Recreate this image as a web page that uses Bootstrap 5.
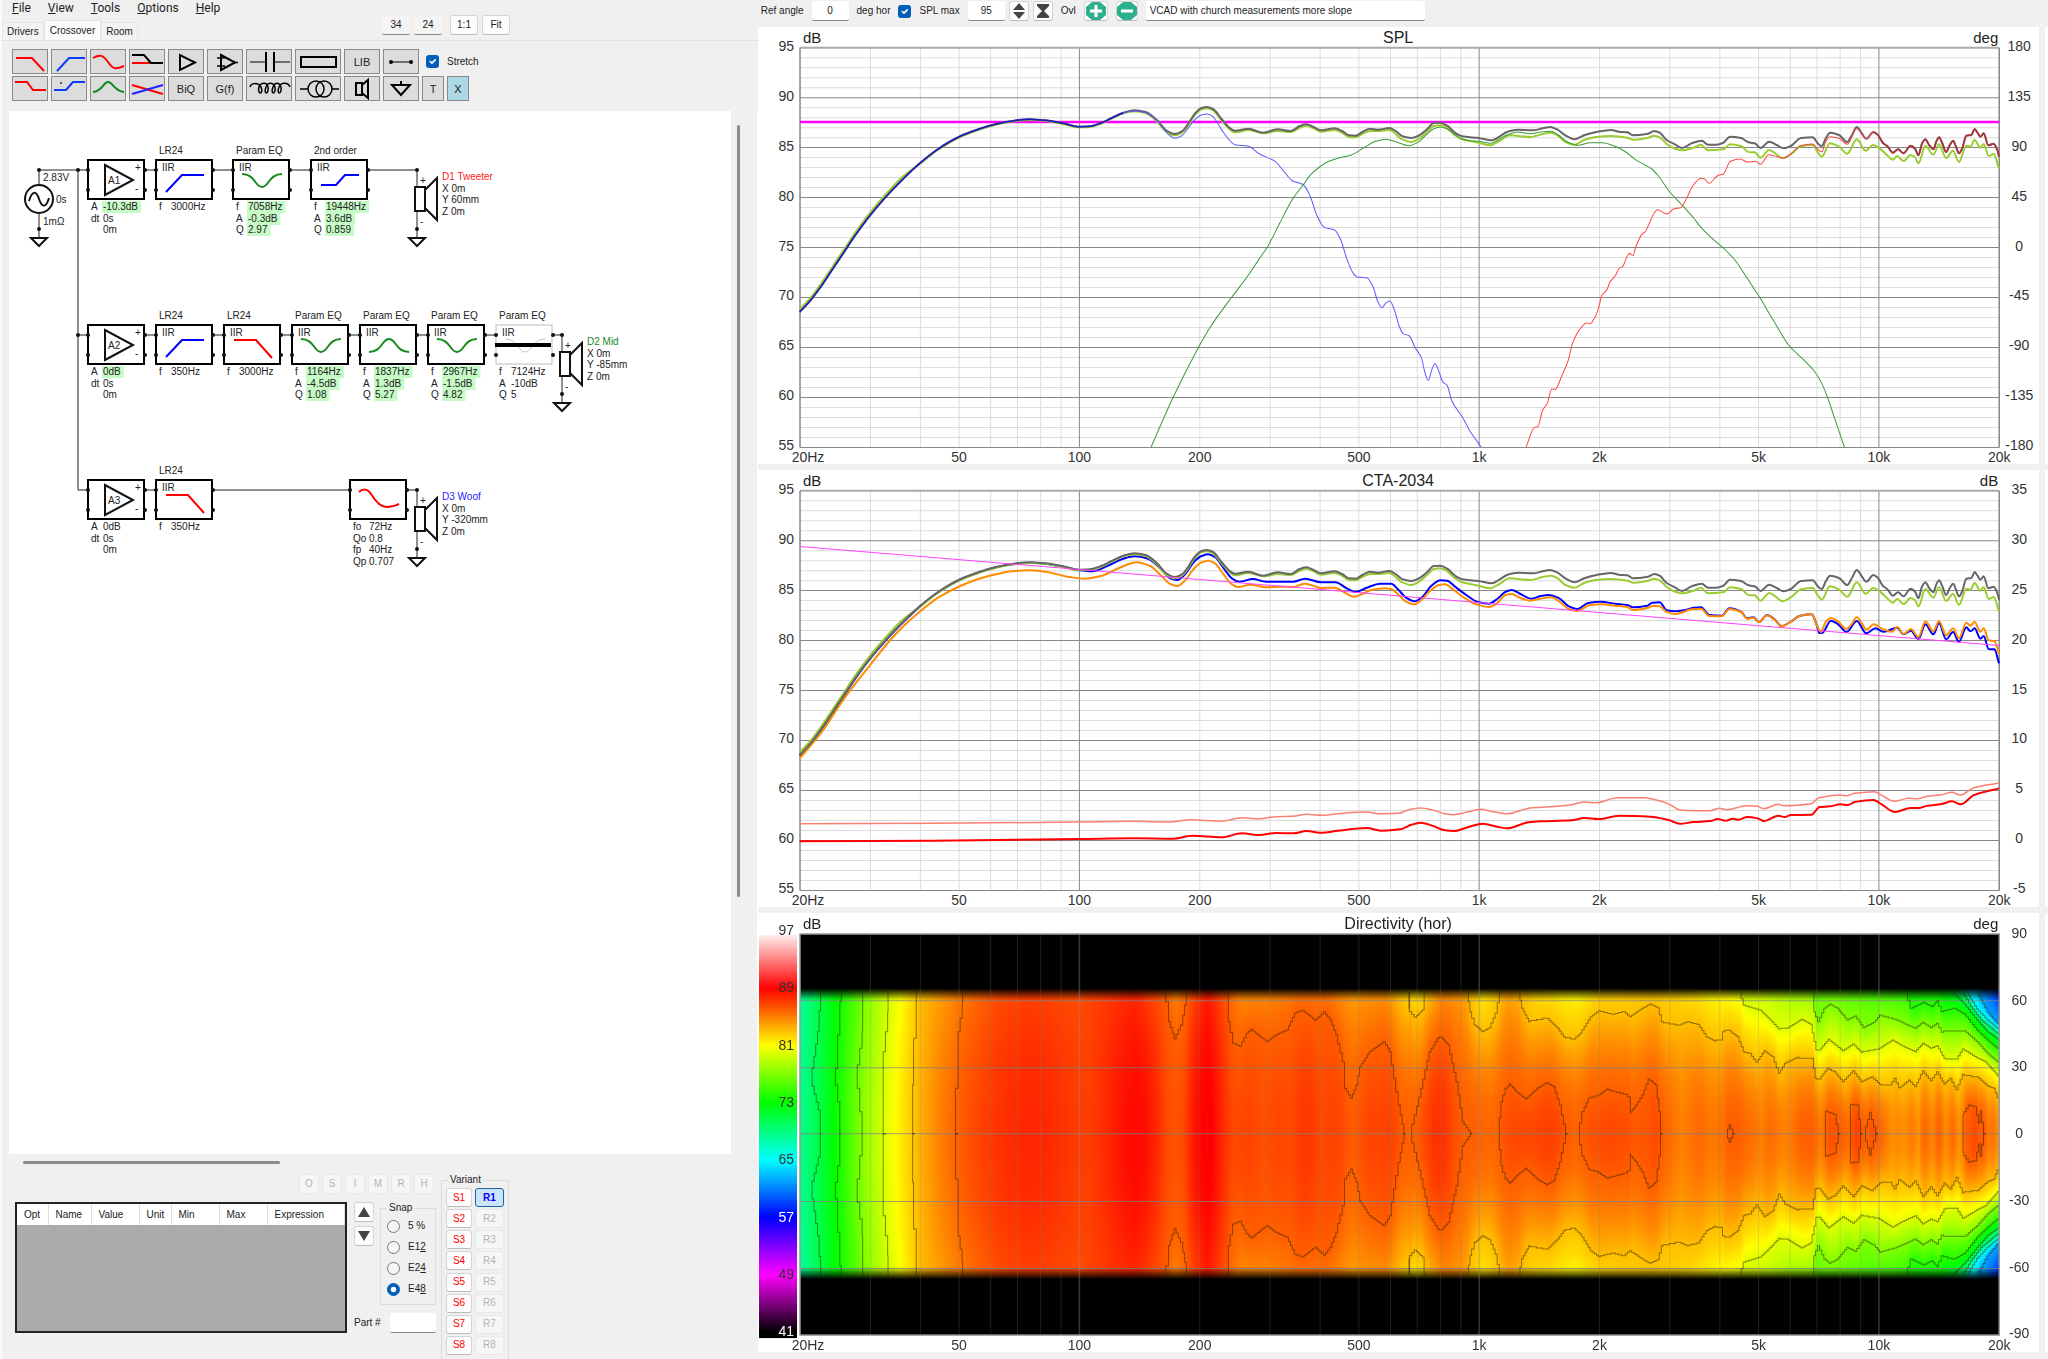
<!DOCTYPE html>
<html lang="en">
<head>
<meta charset="utf-8">
<meta name="viewport" content="width=device-width, initial-scale=1">
<title>Crossover</title>
<link href="https://cdn.jsdelivr.net/npm/bootstrap@5.3.0/dist/css/bootstrap.min.css" rel="stylesheet">
<style>
  body{background:#f0f0f0;color:#222;font:10px/12px "Liberation Sans",Arial,sans-serif;overflow:hidden}
  .left-pane{width:37%;border-left:2px solid #fafafa}
  .menu-strip{height:20px;gap:17px;padding-left:10px;font:12px/16px Roboto,"Liberation Sans",sans-serif}
  .menu-strip a{color:#222;text-decoration:none}
  .tab-row{height:21px}
  .tab-item{border:1px solid #e6e6e6;border-bottom:0;background:#f3f3f3;height:18px;padding:0 4px;color:#222;line-height:18px}
  .tab-item.active{background:#fbfbfb;height:20px;padding:0 5px;line-height:19px}
  .win-btn{background:#fdfdfd;border:1px solid #d4d4d4;border-bottom-color:#bbb;border-radius:3px;padding:0;height:20px;color:#222;display:flex;align-items:center;justify-content:center;font-size:10px;line-height:12px}
  .win-btn:disabled{background:#f6f6f6;border-color:#e9e9e9;color:#b4b4b4}
  .zoom-row{left:380px;top:15px}
  .zoom-row .win-btn{width:28px}
  .flat-field{border:0;border-bottom:1px solid #888;background:#f4f4f4;text-align:center;height:20px;font-size:10px;line-height:12px;padding:0;color:#222;border-radius:2px}
  .flat-white{background:#fff}
  .tool-rows{padding:8px 10px 10px;gap:2px}
  .tool{width:36px;height:25px;background:#dcdcdc;border:1px solid #8a8a8a;padding:0;display:flex;align-items:center;justify-content:center;font-size:11px;line-height:12px;color:#222}
  .tool svg{width:100%;height:100%;overflow:visible;fill:none;stroke:#000;stroke-width:2}
  .tool-wide{width:46px}.tool-slim{width:22px}
  .tool-on{background:#add8e6}
  .tick{width:13px;height:13px;margin:0;flex:none}
  .tick:checked{background-color:#005fb8;border-color:#005fb8}
  .snap .tick:not(:checked){border-color:#777;background-color:#f6f6f6}
  .sheet{background:#fff;min-height:0;overflow:hidden}
  .v-track{width:15px;padding:14px 6px 0}
  .v-thumb{width:3px;height:75%;background:#8c8c8c;border-radius:2px}
  .h-track{height:20px;padding:7px 0 0 13px}
  .h-thumb{width:257px;height:3px;background:#8c8c8c;border-radius:2px}
  .dock{height:185px;padding-left:5px}
  .mini{width:20px}
  .grid-box{width:332px;height:131px;background:#ababab;border:2px solid #222}
  .grid-box table{width:100%;margin:0;table-layout:fixed;border-collapse:collapse}
  .grid-box th{background:#fff;font-weight:400;height:21px;border-right:1px solid #ddd;padding:0 0 0 7px;white-space:nowrap}
  .frame{border:1px solid #dcdcdc;margin:0;padding:0}
  .frame legend{float:none;width:auto;font-size:10px;line-height:12px;margin:0 0 0 6px;padding:0 2px}
  .snap{width:56px;height:103px}
  .snap-list{padding:6px 0 0 6px;gap:8px}
  .variant{width:68px;height:200px}
  .variant-list{height:169px;padding:2px 4px 0;display:grid;grid-template-columns:26px 29px;column-gap:3px;align-content:space-between}
  .variant-list .win-btn{height:19px}
  .variant-list .s-btn{color:#f00}
  .variant-list .r-on{background:#cce4f7;border:1px solid #1a66a8;color:#00f;font-weight:700}
  .ref-bar{height:27px;padding:1px 0 6px 3px}
  .ref-bar label{white-space:nowrap}
  .panel{background:#fff}
  .panel svg{display:block;width:100%;height:auto}
  .edge-strip{width:3px;margin-left:6px;padding-top:27px}
  svg text{font-family:"Liberation Sans",Arial,sans-serif}
  .ax{font-size:14px;fill:#333}
  .cap{font-size:16px;fill:#222}
  #schematic text{font-size:10px;fill:#222}
</style>
<script src="https://cdn.jsdelivr.net/npm/bootstrap@5.3.0/dist/js/bootstrap.bundle.min.js"></script>
</head>
<body>
<div class="d-flex vh-100">
  <section class="left-pane d-flex flex-column flex-shrink-0 position-relative">
    <nav class="menu-strip d-flex">
      <a href="#"><u>F</u>ile</a><a href="#"><u>V</u>iew</a><a href="#"><u>T</u>ools</a><a href="#"><u>O</u>ptions</a><a href="#"><u>H</u>elp</a>
    </nav>
    <div class="zoom-row position-absolute d-flex gap-1">
      <input class="flat-field" style="width:28px" value="34" aria-label="Columns"><input class="flat-field" style="width:28px" value="24" aria-label="Rows">
      <button class="win-btn ms-1">1:1</button><button class="win-btn">Fit</button>
    </div>
    <div class="tab-row d-flex align-items-end border-bottom">
      <button class="tab-item">Drivers</button><button class="tab-item active">Crossover</button><button class="tab-item">Room</button>
    </div>
    <div class="tool-rows d-flex flex-column">
      <div class="d-flex align-items-center" style="gap:3px">
        <button class="tool" aria-label="Low pass"><svg><path d="M3 8H19L31 21" stroke="red"/></svg></button>
        <button class="tool" aria-label="High pass"><svg><path d="M5 21L17 8H33" stroke="#0a3cff"/></svg></button>
        <button class="tool" aria-label="Biquad shape"><svg><path d="M2 8C9 4 12 5 17 12S24 20 33 16" stroke="red"/></svg></button>
        <button class="tool" aria-label="Shelf"><svg><path d="M2 13H20" stroke="red"/><path d="M2 5H14L21 13H33"/></svg></button>
        <button class="tool" aria-label="Buffer"><svg><path d="M11 5V20L26 12.500Z"/></svg></button>
        <button class="tool" aria-label="Op-amp"><svg><path d="M13 5V20L27 12.500Z"/><path d="M9 8H17M13 5V12M9 16H17M26 12.500H30" stroke-width="1.500"/></svg></button>
        <button class="tool tool-wide" aria-label="Capacitor"><svg><path d="M3 12H19M27 12H43" stroke-width="1"/><path d="M19 2V22M27 2V22"/></svg></button>
        <button class="tool tool-wide" aria-label="Resistor"><svg><rect x="5" y="7" width="35" height="10"/></svg></button>
        <button class="tool">LIB</button>
        <button class="tool" aria-label="Wire"><svg><path d="M7 12H28" stroke-width="1"/><circle cx="7" cy="12" r="1"/><circle cx="27" cy="12" r="1"/></svg></button>
        <div class="d-flex align-items-center ps-1"><input type="checkbox" class="form-check-input tick" id="stretch" checked><label for="stretch" class="ps-1 ms-1">Stretch</label></div>
      </div>
      <div class="d-flex align-items-center" style="gap:3px">
        <button class="tool" aria-label="Low shelf"><svg><path d="M2 5H14L20 13H33" stroke="red"/></svg></button>
        <button class="tool" aria-label="High shelf"><svg><path d="M2 13H14L21 5H33" stroke="#0a3cff"/><circle cx="9" cy="6" r=".5" stroke-width="1"/></svg></button>
        <button class="tool" aria-label="Peak"><svg><path d="M2 15C12 14 12 5 17 5S23 14 33 15" stroke="#0a8a1e"/></svg></button>
        <button class="tool" aria-label="Cross"><svg><path d="M2 8L33 17" stroke="red"/><path d="M2 17L33 8" stroke="#22f"/></svg></button>
        <button class="tool">BiQ</button>
        <button class="tool">G(f)</button>
        <button class="tool tool-wide" aria-label="Inductor"><svg><path d="M3 10C4 6 11 5 14 10C17 18 10 18 12 10C14 5 20 5 21 10C22 18 16 18 19 10C21 5 26 5 28 10C29 18 23 18 26 10C28 5 32 5 34 10C35 18 29 18 32 10C34 5 41 5 43 10" stroke-width="1.500"/></svg></button>
        <button class="tool tool-wide" aria-label="Transformer"><svg><g style="stroke-width:1.500"><circle cx="20" cy="12" r="8"/><circle cx="28" cy="12" r="8"/><path d="M4 12H12M36 12H43"/></g></svg></button>
        <button class="tool" aria-label="Driver"><svg><path d="M11 6H17V18H11ZM17 8L23 3V21L17 16"/></svg></button>
        <button class="tool" aria-label="Ground"><svg><path d="M8 8H26L17 18ZM17 8V4"/></svg></button>
        <button class="tool tool-slim">T</button><button class="tool tool-slim tool-on">X</button>
      </div>
    </div>
    <div class="d-flex flex-fill overflow-hidden" style="padding-left:7px;min-height:0">
      <div class="sheet flex-fill"><svg id="schematic" width="640" height="500" viewBox="9 111 640 500"></svg></div>
      <div class="v-track flex-shrink-0"><div class="v-thumb"></div></div>
      <div style="width:12px" class="flex-shrink-0 border-end border-white"></div>
    </div>
    <div class="h-track ms-2 flex-shrink-0"><div class="h-thumb"></div></div>
    <div class="dock d-flex flex-shrink-0 ms-2">
      <div class="d-flex flex-column" style="gap:8px">
        <div class="d-flex justify-content-end" style="gap:3px;padding-right:2px">
          <button class="win-btn mini" disabled>O</button><button class="win-btn mini" disabled>S</button><button class="win-btn mini" disabled>I</button><button class="win-btn mini" disabled>M</button><button class="win-btn mini" disabled>R</button><button class="win-btn mini" disabled>H</button>
        </div>
        <div class="d-flex" style="gap:7px">
          <div class="grid-box">
            <table><colgroup><col style="width:31px"><col style="width:43px"><col style="width:48px"><col style="width:32px"><col style="width:48px"><col style="width:48px"><col></colgroup>
            <thead><tr><th>Opt</th><th>Name</th><th>Value</th><th>Unit</th><th>Min</th><th>Max</th><th>Expression</th></tr></thead></table>
          </div>
          <div class="d-flex flex-column" style="gap:8px">
            <div class="d-flex" style="gap:6px">
              <div class="d-flex flex-column gap-1">
                <button class="win-btn mini" aria-label="Up"><svg width="14" height="12"><path d="M1 11H13L7 1Z" fill="#444"/></svg></button>
                <button class="win-btn mini" aria-label="Down"><svg width="14" height="12"><path d="M1 1H13L7 11Z" fill="#444"/></svg></button>
              </div>
              <fieldset class="frame snap"><legend>Snap</legend>
                <div class="snap-list d-flex flex-column">
                  <div class="d-flex gap-1"><input type="radio" name="snap" class="form-check-input tick" id="s5"><label for="s5" class="ps-1">5 %</label></div>
                  <div class="d-flex gap-1"><input type="radio" name="snap" class="form-check-input tick" id="s12"><label for="s12" class="ps-1">E1<u>2</u></label></div>
                  <div class="d-flex gap-1"><input type="radio" name="snap" class="form-check-input tick" id="s24"><label for="s24" class="ps-1">E2<u>4</u></label></div>
                  <div class="d-flex gap-1"><input type="radio" name="snap" class="form-check-input tick" id="s48" checked><label for="s48" class="ps-1">E4<u>8</u></label></div>
                </div>
              </fieldset>
            </div>
            <div class="d-flex align-items-center justify-content-between"><label for="part">Part #</label><input id="part" class="flat-field flat-white" style="width:46px"></div>
          </div>
        </div>
      </div>
      <fieldset class="frame variant" style="margin-left:5px"><legend>Variant</legend><div class="variant-list" id="variants"></div></fieldset>
    </div>
  </section>

  <main class="flex-fill d-flex flex-column" style="min-width:0">
    <div class="ref-bar d-flex align-items-center flex-shrink-0">
      <label for="refa">Ref angle</label>
      <input id="refa" class="flat-field flat-white ms-2" style="width:37px" value="0">
      <span class="ms-2">deg hor</span>
      <input type="checkbox" class="form-check-input tick ms-2" id="splmax" checked><label for="splmax" class="ms-1 ps-1">SPL max</label>
      <input class="flat-field flat-white ms-2" style="width:37px" value="95" aria-label="SPL max value">
      <button class="win-btn mini ms-1" aria-label="Step"><svg width="14" height="18"><path d="M1 8H13L7 1ZM1 10H13L7 17Z" fill="#444"/></svg></button>
      <button class="win-btn mini ms-1" aria-label="Fit range"><svg width="14" height="18"><path d="M1 2H13V4L8 9L13 14V16H1V14L6 9L1 4Z" fill="#444"/></svg></button>
      <span class="ms-2">Ovl</span>
      <button class="win-btn ms-2" style="width:24px" aria-label="Add overlay"><svg width="20" height="18"><path d="M6 0H14L20 5V13L14 18H6L0 13V5Z" fill="#2fb08c"/><path d="M10 3V15M4 9H16" stroke="#fff" stroke-width="3"/></svg></button>
      <button class="win-btn ms-2" style="width:22px" aria-label="Remove overlay"><svg width="20" height="18"><path d="M6 0H14L20 5V13L14 18H6L0 13V5Z" fill="#2fb08c"/><path d="M4 9H16" stroke="#fff" stroke-width="3"/></svg></button>
      <input class="flat-field flat-white ms-2 ps-1 text-start" style="width:279px" value="VCAD with church measurements more slope" aria-label="Title">
    </div>
    <div class="d-flex flex-column" style="gap:6px">
      <div class="panel"><svg id="spl" viewBox="0 0 1281 437"></svg></div>
      <div class="panel"><svg id="cta" viewBox="0 0 1281 437"></svg></div>
      <div class="panel"><svg id="dir" viewBox="0 0 1281 439"></svg></div>
    </div>
  </main>
  <aside class="edge-strip flex-shrink-0 d-flex flex-column" style="gap:6px"><div class="bg-white" style="height:437px"></div><div class="bg-white" style="height:437px"></div><div class="bg-white" style="height:439px"></div></aside>
</div>

<script>
const NS='http://www.w3.org/2000/svg';
function add(p,tag,at,txt){const e=document.createElementNS(NS,tag);for(const k in at)e.setAttribute(k,at[k]);if(txt!=null)e.textContent=txt;p.appendChild(e);return e}

/* variant buttons */
const vl=document.getElementById('variants');
for(let i=1;i<9;i++){
  vl.insertAdjacentHTML('beforeend',`<button class="win-btn s-btn">S${i}</button><button class="win-btn ${i==1?'r-on':''}" ${i>1?'disabled':''}>R${i}</button>`);
}

/* ---------- schematic ---------- */
const S=document.getElementById('schematic');
const line=(d,c='#222',w=1)=>add(S,'path',{d,stroke:c,'stroke-width':w,fill:'none'});
const dot=(x,y)=>add(S,'circle',{cx:x,cy:y,r:2,fill:'#111'});
const txt=(x,y,t,c)=>{const e=add(S,'text',{x,y},t);if(c)e.style.fill=c;return e};
const shapes={
  hp:['#00f','M10 32L26 15H48'],lp:['#f00','M10 15H32L48 33'],
  dip:['#168a1e','M9 14C22 14 22 27 29 27S36 14 49 14'],peak:['#168a1e','M9 27C22 27 22 14 29 14S36 27 49 27'],
  hs:['#00f','M10 25H25L34 15H48'],lt:['#f00','M9 12C13 8 18 9 21 14S30 28 38 27S44 26 49 24']};
function box(x,y,kind,title,rows,o={}){
  if(kind!='amp'&&title)txt(x+3,y-6,title);
  add(S,'rect',{x:x,y:y,width:56,height:39,fill:'#fff',stroke:o.off?'#bbb':'#000','stroke-width':o.off?1:2});
  if(kind=='amp'){line(`M${x+17} ${y+5}V${y+35}L${x+45} ${y+20}Z`,'#111',2);txt(x+20,y+24,title);txt(x+47,y+11,'+');txt(x+47,y+32,'-');}
  else{const[c,d]=shapes[kind];const p=line(d,c,o.off?1:2);p.setAttribute('transform',`translate(${x},${y})`);if(o.off)p.setAttribute('opacity','.35');
    if(kind!='lt')txt(x+6,y+11,'IIR')}
  if(o.off)line(`M${x-1} ${y+20}H${x+55}`,'#000',4);
  [[0,10],[0,30],[57,10],[57,30]].forEach(([a,b])=>dot(x+a,y+b));
  rows.forEach(([k,v,g],i)=>{const by=y+50+Math.round(i*11.700);
    const vx=x+(kind=='lt'?19:15);
    const r=g?add(S,'rect',{x:vx-1,y:by-9,width:10,height:12,fill:'#c6fbc6'}):null;
    txt(x+3,by,k);const t=txt(vx,by,v);if(r)r.setAttribute('width',t.getComputedTextLength()+4);});
}
const amp=(x,y,n,rows)=>box(x,y,'amp',n,rows);
const ground=(x,y)=>{line(`M${x} ${y-9}V${y}`,'#222',1);line(`M${x-8} ${y}H${x+8}L${x} ${y+8}Z`,'#111',2);dot(x,y-9)};
function speaker(x,y,name,c,rows){
  line(`M${x} ${y}V${y+17}M${x} ${y+41}V${y+59}`);dot(x,y);
  line(`M${x-2} ${y+17}H${x+8}V${y+41}H${x-2}ZM${x+8} ${y+20}L${x+20} ${y+8}V${y+50}L${x+8} ${y+38}`,'#111',2);
  txt(x+3,y+14,'+');txt(x+3,y+55,'-');ground(x,y+68);
  [name,...rows].forEach((t,i)=>txt(x+25,y+10+Math.round(i*11.700),t,i?null:c));
}
line('M39 170H417M78 170V490M78 335H562M78 490H417M39 170V184M39 214V229');
dot(39,170);dot(78,170);dot(78,335);
add(S,'circle',{cx:39,cy:199,r:14,fill:'#fff',stroke:'#111','stroke-width':2});
line('M29 201C32 191 36 190 39 199S46 208 49 198','#111',2);
txt(43,181,'2.83V');txt(56,203,'0s');txt(43,225,'1mΩ');ground(39,238);
amp(88,160,'A1',[['A','-10.3dB',1],['dt','0s'],['','0m']]);
box(156,160,'hp','LR24',[['f','3000Hz']]);
box(233,160,'dip','Param EQ',[['f','7058Hz',1],['A','-0.3dB',1],['Q','2.97',1]]);
box(311,160,'hs','2nd order',[['f','19448Hz',1],['A','3.6dB',1],['Q','0.859',1]]);
speaker(417,170,'D1 Tweeter','#f22',['X 0m','Y 60mm','Z 0m']);
amp(88,325,'A2',[['A','0dB',1],['dt','0s'],['','0m']]);
box(156,325,'hp','LR24',[['f','350Hz']]);
box(224,325,'lp','LR24',[['f','3000Hz']]);
box(292,325,'dip','Param EQ',[['f','1164Hz',1],['A','-4.5dB',1],['Q','1.08',1]]);
box(360,325,'peak','Param EQ',[['f','1837Hz',1],['A','1.3dB',1],['Q','5.27',1]]);
box(428,325,'dip','Param EQ',[['f','2967Hz',1],['A','-1.5dB',1],['Q','4.82',1]]);
box(496,325,'dip','Param EQ',[['f','7124Hz'],['A','-10dB'],['Q','5']],{off:1});
speaker(562,335,'D2 Mid','#168a1e',['X 0m','Y -85mm','Z 0m']);
amp(88,480,'A3',[['A','0dB'],['dt','0s'],['','0m']]);
box(156,480,'lp','LR24',[['f','350Hz']]);
box(350,480,'lt','',[['fo','72Hz'],['Qo','0.8'],['fp','40Hz'],['Qp','0.707']]);
speaker(417,490,'D3 Woof','#22f',['X 0m','Y -320mm','Z 0m']);

/* ---------- charts ---------- */
/* traces are stored in two halves, a coarse low band and a fine high band, on a 3-per-pixel level scale */
const X0=42,X1=1241,DEC=(X1-X0)/3;
const fx=f=>X0+DEC*Math.log10(f/20);
const lo=v=>v/2.240-3, hi=v=>642+v/2.420;
const parse=s=>s.trim().split(/\s+/).map(p=>p.split(',').map(Number));
function join(a,b,oy,sy=0){return [...(a?parse(a).map(([x,y])=>[lo(x),(y+sy)/3-oy]):[]),...(b?parse(b).map(([x,y])=>[hi(x),(y+sy)/3-oy]):[])]}
function smooth(p){
  const n=p.length,m=[];
  const d=i=>(p[i+1][1]-p[i][1])/(p[i+1][0]-p[i][0]);
  for(let i=0;i<n;i++){if(i==0)m.push(d(0));else if(i==n-1)m.push(d(n-2));else{const a=d(i-1),b=d(i);m.push(a*b<=0?0:2*a*b/(a+b))}}
  let s=`M${p[0][0].toFixed(1)} ${p[0][1].toFixed(1)}`;
  for(let i=0;i<n-1;i++){const h=(p[i+1][0]-p[i][0])/3;
    s+=`C${(p[i][0]+h).toFixed(1)} ${(p[i][1]+m[i]*h).toFixed(1)} ${(p[i+1][0]-h).toFixed(1)} ${(p[i+1][1]-m[i+1]*h).toFixed(1)} ${p[i+1][0].toFixed(1)} ${p[i+1][1].toFixed(1)}`}
  return s;
}
const D={};
D.rise='100,876 125,840 150,795 175,745 200,695 225,645 256,589 292,532 330,479 369,430 410,387 456,351 500,328 540,312 580,302 615,298 650,301 690,310 725,320 750,319 775,309 800,293 825,278 ';
D.woof=[D.rise+'850,273 872,277 892,292 910,315 925,342 940,355 955,348 970,325 985,299 1000,285 1012,282 1025,289 1040,318 1055,348 1075,374 1105,379 1130,402 1165,424 1185,455 1203,482 1228,494 1243,527 1258,585 1275,622 1298,630 1312,660 1325,715 1340,760 1350,772 1370,773 1384,800 1395,845 1404,863 1412,850 1422,843 1432,870 1442,915 1451,940 1465,947 1478,982 1492,1012 1502,1065 1508,1081 1516,1048 1523,1031 1532,1055 1540,1085 1550,1096 1560,1140',
 '133,1160 150,1190 170,1235 190,1270 196,1281'];
D.mid=['887,1281 937,1130 994,980 1020,920 1068,831 1105,765 1130,715 1148,680 1175,610 1205,535 1228,494 1245,463 1265,440 1285,424 1305,415 1335,405 1365,382 1390,364 1412,358 1435,365 1465,377 1485,367 1505,342 1520,326 1535,321 1550,327',
 '133,344 150,357 170,362 190,364 220,370 240,357 260,344 285,336 315,341 345,335 365,334 385,347 405,366 430,376 460,368 490,368 520,379 545,395 565,415 585,430 608,446 625,468 650,512 682,555 710,594 730,625 755,655 783,685 810,720 840,775 870,832 905,905 940,975 975,1018 1000,1050 1020,1090 1035,1135 1050,1190 1065,1245 1075,1281'];
D.tail='1145,336 1156,345 1168,368 1180,380 1192,398 1205,388 1218,400 1235,377 1246,386 1254,406 1263,370 1271,358 1280,375 1290,388 1298,362 1304,352 1312,370 1321,396 1330,375 1338,362 1345,380 1352,400 1360,385 1370,347 1382,345 1390,327 1397,338 1404,350 1412,340 1423,376 1436,371 1445,390 1449,410';
D.axis=[D.rise+'850,271 875,276 900,300 920,330 940,342 955,335 970,312 985,281 1000,264 1012,261 1025,266 1045,297 1060,320 1075,332 1105,326 1138,338 1170,328 1200,333 1220,318 1235,313 1250,320 1268,331 1298,325 1315,333 1330,346 1345,347 1360,336 1378,326 1395,329 1420,324 1435,333 1450,349 1470,354 1485,348 1505,328 1520,309 1535,308 1550,317',
 '133,338 150,349 190,354 222,361 240,350 260,335 285,329 320,331 345,325 363,321 380,328 400,346 422,358 445,346 475,336 510,330 530,335 550,337 563,346 600,341 615,333 628,338 645,360 665,373 682,384 705,370 730,362 745,374 765,374 782,368 798,350 825,354 843,367 858,370 872,384 893,365 910,374 928,385 945,378 970,354 998,352 1012,372 1020,378 1030,355 1040,338 1062,345 1082,366 1093,345 1105,321 1117,340 1128,356 '+D.tail];
D.win=[D.rise.replace(/,(\d+)/g,(m,v)=>','+(+v-(v>450?8:-2)))+'850,274 875,279 900,304 920,334 940,346 955,339 970,316 985,285 1000,268 1012,265 1025,270 1045,301 1060,324 1075,337 1105,330 1138,340 1170,333 1200,336 1220,323 1235,317 1250,324 1268,335 1298,330 1315,338 1330,351 1345,352 1360,342 1378,333 1395,333 1420,330 1450,358 1470,366 1485,358 1505,336 1520,318 1535,316 1550,324',
 '133,346 150,358 190,368 218,376 240,363 265,346 315,351 345,342 365,338 380,345 400,366 422,374 445,360 475,351 510,348 550,353 563,359 600,353 615,347 628,352 645,372 665,386 682,391 710,383 728,374 745,391 782,388 798,373 825,378 843,396 858,397 872,413 893,390 910,402 925,415 945,403 970,379 998,375 1012,400 1020,410 1040,370 1062,380 1082,401 1105,358 1126,392 1145,375 1160,385 1178,405 1192,419 1203,408 1218,423 1235,405 1246,412 1254,430 1271,378 1290,404 1304,373 1321,414 1338,392 1352,426 1370,377 1380,380 1390,360 1404,383 1412,372 1424,408 1436,402 1449,446'];
D.tweet=['','305,1281 325,1222 333,1220 345,1170 356,1150 367,1107 375,1108 392,1065 407,1020 417,970 435,927 452,909 459,911 473,888 482,855 488,825 500,810 508,785 520,768 530,745 538,740 550,707 556,700 563,707 571,677 585,643 593,635 603,610 612,584 623,569 645,582 663,566 679,563 693,535 707,500 728,475 737,477 747,490 770,466 782,462 799,424 823,417 840,426 860,424 872,433 892,404 928,414 945,402 968,377 998,372 1012,390 1020,395 1030,365 1040,350 1062,355 1082,373 1105,326 1128,356 '+D.tail];
D.power=['100,880 150,800 200,700 256,603 303,525 335,480 369,440 410,398 456,365 500,342 540,328 575,319 610,316 650,320 700,335 738,341 775,333 815,309 855,292 885,303 910,332 930,357 945,363 960,350 985,308 1000,292 1015,287 1030,295 1050,329 1068,358 1082,366 1110,359 1145,367 1175,365 1205,366 1230,356 1250,362 1268,369 1298,368 1320,382 1340,395 1360,387 1380,375 1410,370 1425,372 1440,388 1458,410 1475,418 1490,408 1510,380 1530,361 1545,358',
 '133,378 155,398 185,418 215,426 232,417 255,390 270,387 290,398 315,407 340,401 365,397 385,409 408,432 428,438 460,420 490,418 520,422 550,426 563,435 598,429 610,423 628,424 645,441 665,447 680,443 705,433 728,431 748,453 778,454 797,432 825,441 840,461 855,458 868,471 888,451 905,463 923,484 945,470 968,452 996,447 1008,480 1018,501 1030,470 1042,459 1060,470 1080,492 1092,478 1105,457 1117,475 1128,494 1146,478 1165,490 1190,500 1203,486 1218,507 1236,492 1254,516 1271,469 1290,499 1304,468 1321,511 1338,490 1352,520 1370,473 1380,482 1390,471 1404,500 1412,490 1424,526 1438,528 1449,566'];
D.early=[D.rise.replace(/,(\d+)/g,(m,v)=>','+(+v-5)).replace('750,314 775,304 800,288 825,273 ','755,319 800,296 825,281 ')+'850,274 880,281 910,313 930,340 945,345 960,332 985,288 1000,273 1015,268 1030,276 1050,310 1068,340 1085,350 1115,342 1145,350 1205,350 1232,341 1268,352 1300,352 1325,370 1345,381 1370,368 1400,356 1425,356 1440,373 1458,398 1477,409 1495,395 1515,362 1535,346 1550,347',
 '133,365 160,390 190,412 215,416 235,402 255,380 270,375 290,386 318,401 340,393 360,390 385,400 408,424 428,432 455,414 485,410 520,416 550,420 563,427 598,422 610,413 628,412 645,436 665,439 690,435 710,428 728,427 748,450 778,452 797,430 825,440 840,460 855,457 868,471 888,450 905,462 923,483 945,470 968,452 996,448 1008,480 1014,504 1022,503 1042,467 1060,478 1080,501 1105,468 1128,505 1150,490 1170,500 1203,488 1218,508 1236,497 1254,522 1271,478 1290,508 1304,475 1321,523 1338,501 1352,530 1370,487 1380,499 1390,490 1404,521 1412,513 1424,552 1438,553 1449,595'];
D.di1=['100,1076 400,1075 725,1071 850,1069 925,1071 975,1064 1045,1068 1090,1058 1130,1061 1165,1055 1205,1054 1235,1048 1270,1051 1305,1046 1370,1041 1400,1046 1440,1045 1465,1034 1490,1029 1520,1036 1545,1046',
 '130,1049 160,1042 195,1033 225,1040 260,1046 300,1033 320,1028 380,1024 410,1020 445,1011 475,1013 525,998 590,998 630,1008 655,1020 675,1034 710,1037 750,1037 772,1030 790,1034 838,1022 865,1024 880,1031 915,1018 928,1022 995,1016 1012,999 1065,990 1080,992 1100,985 1147,980 1165,990 1195,1009 1230,1000 1250,1001 1275,994 1310,989 1335,982 1355,990 1388,968 1449,954'];
D.di2=['100,1129 400,1127 725,1122 850,1120 935,1121 980,1112 1045,1117 1090,1105 1130,1110 1165,1104 1205,1105 1235,1098 1270,1103 1305,1097 1370,1089 1405,1097 1445,1093 1470,1079 1490,1073 1515,1081 1545,1096',
 '130,1098 165,1086 200,1076 235,1085 260,1090 310,1072 340,1069 415,1066 445,1059 480,1062 530,1052 605,1055 650,1065 677,1076 710,1071 750,1068 768,1062 788,1067 805,1061 818,1064 840,1056 865,1060 880,1068 915,1052 930,1056 945,1050 995,1049 1015,1026 1040,1024 1065,1018 1083,1020 1100,1011 1145,1005 1165,1018 1197,1041 1235,1029 1255,1029 1275,1022 1310,1017 1335,1009 1357,1018 1388,990 1449,970'];

const FREQ=[[20,'20Hz',8],[50,'50'],[100,'100'],[200,'200'],[500,'500'],[1000,'1k'],[2000,'2k'],[5000,'5k'],[10000,'10k'],[20000,'20k']];
function freqs(cb){for(const d of[10,100,1000,10000])for(let k=1;k<10;k++){const f=d*k;if(f>20&&f<20000)cb(fx(f),k==1)}}
function labels(svg,title,rt,yb,base){
  add(svg,'text',{x:45,y:16,class:'cap'},'dB').style.fontSize='15px';
  add(svg,'text',{x:640,y:base,class:'cap','text-anchor':'middle'},title);
  add(svg,'text',{x:1240,y:16,class:'cap','text-anchor':'end'},rt).style.fontSize='15px';
  FREQ.forEach(([f,t,o])=>add(svg,'text',{x:fx(f)+(o||0),y:yb,class:'ax','text-anchor':'middle'},t));
}
function chart(id,title,rt,right){
  const svg=document.getElementById(id),T=20.700,B=420.300,px=(B-T)/40;
  for(let i=1;i<40;i++)if(i%5)add(svg,'path',{d:`M${X0} ${T+i*px}H${X1}`,stroke:'#dcdcdc'});
  freqs((x,m)=>{if(!m)add(svg,'path',{d:`M${x} ${T}V${B}`,stroke:'#dcdcdc'})});
  freqs((x,m)=>{if(m)add(svg,'path',{d:`M${x} ${T}V${B}`,stroke:'#888'})});
  for(let i=0;i<=8;i++){const y=T+i*5*px;
    add(svg,'path',{d:`M${X0} ${y}H${X1}`,stroke:i?'#888':'#aaa','stroke-width':i?1:2});
    add(svg,'text',{x:36,y:y+3,class:'ax','text-anchor':'end'},95-i*5);
    add(svg,'text',{x:1261,y:y+3,class:'ax','text-anchor':'middle'},right(i))}
  add(svg,'path',{d:`M${X0} ${T}V${B}M${X1} ${T}V${B}`,stroke:'#888','stroke-width':1.500});
  labels(svg,title,rt,435,16);
  return (pts,c,w)=>add(svg,'path',{d:smooth(pts),stroke:c,'stroke-width':w,fill:'none','stroke-linejoin':'round'});
}
let c1=chart('spl','SPL','deg',i=>180-45*i);
c1([[X0,95],[X1,95]],'#f0f',2.500);
c1(join(...D.win,7),'#9acd32',2);
c1(join(...D.axis,7),'#666',2);
c1(join(...D.woof,7),'#5a5aff',1);
c1(join(D.rise,'',7),'#1c1cb8',1.500);
c1(join(...D.mid,7),'#3a9a3a',1);
c1(join(...D.tweet,7),'#f44',1);
c1(join('',D.tail,7),'#b03038',1.500);
let c2=chart('cta','CTA-2034','dB',i=>35-5*i);
c2(join(...D.early,5),'#00f',2);
c2(join(...D.power,5),'#ff8c00',2);
c2(join(...D.win,5,-6),'#9acd32',2);
c2(join(...D.axis,5,-6),'#666',2);
c2([[X0,76.500],[X1,175.500]],'#f4f',1);
c2(join(...D.di1,5),'#fa8072',1.500);
c2(join(...D.di2,5),'#f00',2);

/* ---------- directivity ---------- */
const P=document.getElementById('dir'),PT=21,PB=422,MID=(686/3)-8;
const stops=[[97,255,255,255],[89,255,0,0],[81,255,255,0],[73,0,255,0],[65,0,255,255],[57,0,0,255],[49,255,0,255],[41,0,0,0]];
function colour(L){if(L>=97)L=96.990;if(L<=41)L=41.010;const i=Math.floor((97-L)/8),t=(97-L)/8-i,a=stops[i],b=stops[i+1];return[1,2,3].map(k=>a[k]+(b[k]-a[k])*t)}
const C={
86:[['920,262 926,290 930,350 943,402 958,360 966,300 967,262',''],
 ['1060,262 1064,350 1075,415 1090,424 1105,385 1115,373 1135,395 1150,410 1170,390 1195,375 1212,325 1230,316 1258,346 1278,321 1292,345 1305,390 1320,470 1325,550 1338,580 1350,540 1358,485 1380,440 1412,410 1425,440 1435,520 1445,600 1457,686',''],
 ['','28,686 40,630 55,550 75,440 95,400 103,397 120,420 140,530 155,650 175,686'],['','240,686 248,590 260,550 268,537 285,560 308,582 335,550 358,533 375,545 390,600 405,686'],
 ['','434,686 445,620 460,580 480,573 505,552 550,568 557,575 558,625 575,600 590,570 605,522 622,540 630,620 634,686'],['','792,686 800,660 810,686'],['','1029,686 1035,618 1055,628 1065,686'],['','1090,686 1096,598 1110,600 1118,686'],['','1126,686 1140,622 1156,686'],['','1362,686 1364,630 1380,600 1395,605 1403,655 1407,618 1416,686']],
83:[['','22,262 28,320 40,337 58,315 64,262'],['','165,262 173,320 185,360 202,380 220,368 235,325 245,262'],
 ['','290,262 298,310 315,350 360,340 385,370 400,395 425,402 440,385 465,335 485,317 520,328 545,320 560,335 590,310 608,297 627,308 637,350 680,360 700,350 725,358 745,395 765,408 780,405 785,380 800,376 820,395 835,440 850,445 866,472 885,437 905,455 920,505 935,475 965,457 1000,460 1008,520 1018,522 1038,490 1055,500 1075,530 1100,497 1120,530 1145,515 1165,538 1190,540 1200,520 1212,548 1235,525 1250,545 1268,497 1288,527 1303,500 1320,538 1335,520 1350,555 1365,508 1400,515 1425,542 1440,550 1449,578']],
80:[['','825,262 835,300 875,315 900,345 920,372 940,370 975,343 997,358 1010,435 1018,435 1040,403 1075,437 1100,417 1120,442 1160,433 1195,405 1215,420 1250,440 1268,415 1288,430 1303,422 1320,460 1350,462 1365,432 1400,458 1420,470 1440,498 1449,512']],
77:[['','1001,262 1005,320 1015,350 1030,310 1043,297 1062,310 1085,345 1105,333 1125,368 1150,352 1165,330 1200,342 1250,370 1268,352 1288,368 1303,355 1315,382 1370,378 1400,410 1425,445 1449,470']],
74:[['','1228,262 1240,310 1270,292 1290,305 1303,287 1315,320 1345,310 1370,328 1400,375 1425,405 1449,430']],
71:[['','1340,262 1370,298 1400,345 1425,380 1449,402']],
68:[['','1365,262 1385,305 1410,345 1449,385']],
65:[['','1375,262 1400,312 1425,345 1449,370']],
62:[['','1400,262 1425,320 1449,355']]};
const LOWC=['147,255 140,380 128,490 128,520 146,615 147,686','193,255 190,290 180,490 190,590 192,686','241,255 240,380 229,480 240,620 241,686','298,255 297,320 287,440 287,570 293,686','361,255 355,400 353,540 358,686','465,255 464,300 455,380 449,550 455,686'];
const L60=[...parse('100,68 256,77.500 369,83 456,85 540,86.500 615,87 725,86.600 850,87.800 920,86 943,84.800 967,86 1012,88.200 1060,86 1085,84.600 1150,84.700 1230,85.400 1278,85.300 1338,84 1412,84.400 1450,82.500 1480,81.500 1510,83 1540,84.500').map(([x,y])=>[lo(x),y]),
 ...parse('150,84 202,81.500 265,83.800 320,82.200 425,81 485,82.200 608,82.700 700,82 765,81 820,80.300 870,79.500 930,78.300 1000,77.300 1008,76.200 1043,76.300 1125,75.500 1250,74 1303,73.500 1340,71.500 1370,68 1400,63 1425,60.500 1449,58').map(([x,y])=>[hi(x),y])];
function at(p,x){if(x<p[0][0]||x>p[p.length-1][0])return;for(let i=1;i<p.length;i++)if(x<=p[i][0]){const a=p[i-1],b=p[i];return a[1]+(b[1]-a[1])*(x-a[0])/((b[0]-a[0])||1)}}
const axisPts=join(...D.axis,7),CP={};
for(const l in C)CP[l]=C[l].map(([a,b])=>join(a,b,8));
const W=1199,H=401;
const fo=add(P,'foreignObject',{x:X0,y:PT,width:W,height:H});
const cv=document.createElement('canvas');cv.width=W;cv.height=H;cv.style.display='block';fo.appendChild(cv);
const g=cv.getContext('2d'),im=g.createImageData(W,H),EDGE=(686-262)/3;
for(let i=0;i<W;i++){
  const x=X0+i+.5;
  const ay=at(axisPts,Math.min(x,axisPts[axisPts.length-1][0]))??at(axisPts,axisPts[0][0]);
  const L0=95-(ay-20.700)/9.990;
  let k=[[0,L0]];
  for(const l of[86,83,80,77,74,71,68,65,62]){if(l>=L0+.3)continue;for(const p of CP[l]){const y=at(p,x);if(y!==undefined){const a=MID-y;const q=k[k.length-1];if(a*a>q[0]+4)k.push([a*a,Math.min(l,q[1]-.05)])}}}
  const last=k[k.length-1],e=Math.min(at(L60,x)??(x<100?L0-1:58),last[1]-.2);
  k.push([Math.max(EDGE*EDGE,last[0]+20),e]);
  for(let j=0;j<H;j++){
    const a=Math.abs(PT+j+.5-MID),q=a*a;let L=e;
    for(let n=1;n<k.length;n++)if(q<=k[n][0]){L=k[n-1][1]+(k[n][1]-k[n-1][1])*(q-k[n-1][0])/(k[n][0]-k[n-1][0]);break}
    const fade=Math.max(0,Math.min(1,(EDGE+4-a)/12)),c=colour(L),o=(j*W+i)*4;
    im.data[o]=c[0]*fade;im.data[o+1]=c[1]*fade;im.data[o+2]=c[2]*fade;im.data[o+3]=255;
  }
}
g.putImageData(im,0,0);
freqs((x,m)=>add(P,'path',{d:`M${x} ${PT}V${PB}`,stroke:m?'rgba(140,140,140,.4)':'rgba(130,130,130,.24)','stroke-width':m?1.500:1}));
[287,488,686,889,1090].forEach(v=>add(P,'path',{d:`M${X0} ${v/3-8}H${X1}`,stroke:'rgba(128,128,128,.75)'}));
/* contours run in small steps, mirrored about the axis */
function stair(p,flip){const m=y=>flip?2*MID-y:y;let s=`M${p[0][0].toFixed(1)} ${m(p[0][1]).toFixed(1)}`;
  for(let i=1;i<p.length;i++){const a=p[i-1],b=p[i],n=Math.max(1,Math.round(Math.min(Math.abs(b[0]-a[0])/2,Math.abs(b[1]-a[1]))));
    for(let t=1;t<=n;t++)s+=`V${m(a[1]+(b[1]-a[1])*t/n).toFixed(1)}H${(a[0]+(b[0]-a[0])*t/n).toFixed(1)}`}
  return s}
const iso=p=>[0,1].forEach(f=>add(P,'path',{d:stair(p,f),stroke:'rgba(40,30,0,.5)','stroke-width':1,fill:'none'}));
for(const l in CP)CP[l].forEach(iso);
LOWC.forEach(s=>iso(join(s,'',8)));
iso(join('1465,262 1466,310','',8));
add(P,'rect',{x:X0,y:PT,width:W,height:H,fill:'none',stroke:'#999','stroke-width':1.500});
/* level scale */
const gr=add(add(P,'defs',{}),'linearGradient',{id:'scale',x1:0,x2:0,y1:18,y2:419,gradientUnits:'userSpaceOnUse'});
stops.forEach((s,i)=>add(gr,'stop',{offset:i/7,'stop-color':`rgb(${s[1]},${s[2]},${s[3]})`}));
add(P,'rect',{x:1,y:22,width:38,height:403,fill:'url(#scale)'});
for(let i=0;i<8;i++){const t=add(P,'text',{x:36,y:Math.round(22+i*57.300),class:'ax','text-anchor':'end'},97-8*i);if(i==5||i==7)t.style.fill='#fff'}
[[90,83],[60,284],[30,484],[0,683],[-30,886],[-60,1087],[-90,1284]].forEach(([v,y])=>add(P,'text',{x:1261,y:Math.round(y/3-3),class:'ax','text-anchor':'middle'},v));
labels(P,'Directivity (hor)','deg',437,16);
</script>
</body>
</html>
